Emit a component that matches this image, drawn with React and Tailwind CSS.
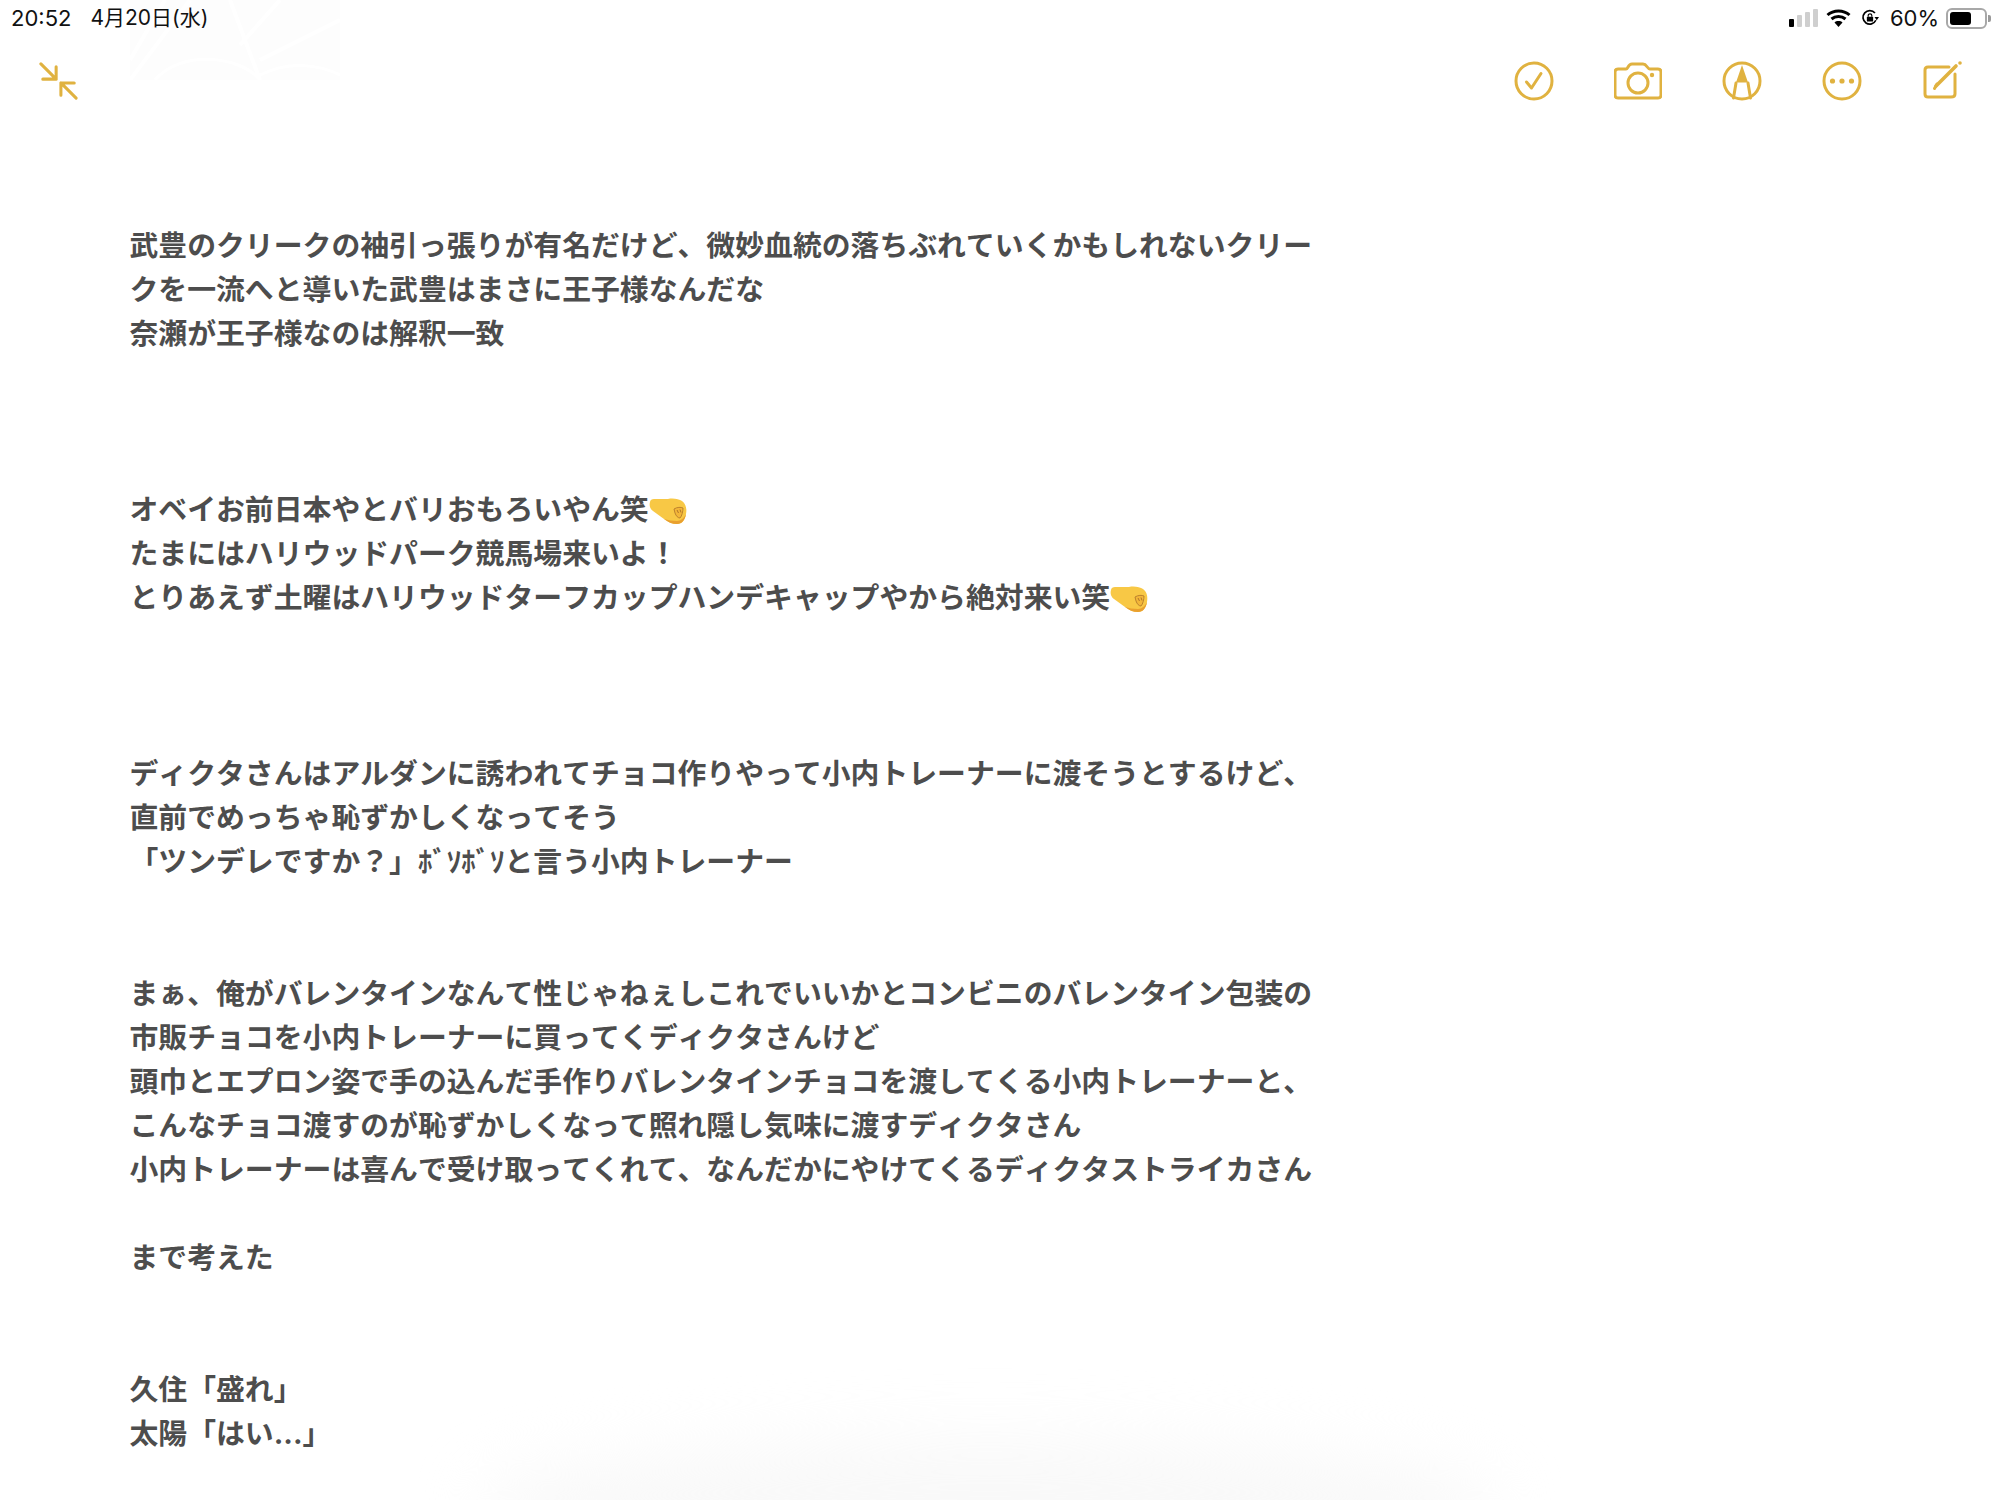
const GOLD = '#e0b240'

const NOTE_LINES = [
  '武豊のクリークの袖引っ張りが有名だけど、微妙血統の落ちぶれていくかもしれないクリー',
  'クを一流へと導いた武豊はまさに王子様なんだな',
  '奈瀬が王子様なのは解釈一致',
  '', '', '',
  'オベイお前日本やとバリおもろいやん笑@',
  'たまにはハリウッドパーク競馬場来いよ！',
  'とりあえず土曜はハリウッドターフカップハンデキャップやから絶対来い笑@',
  '', '', '',
  'ディクタさんはアルダンに誘われてチョコ作りやって小内トレーナーに渡そうとするけど、',
  '直前でめっちゃ恥ずかしくなってそう',
  '「ツンデレですか？」ﾎﾞｿﾎﾞｿと言う小内トレーナー',
  '', '',
  'まぁ、俺がバレンタインなんて性じゃねぇしこれでいいかとコンビニのバレンタイン包装の',
  '市販チョコを小内トレーナーに買ってくディクタさんけど',
  '頭巾とエプロン姿で手の込んだ手作りバレンタインチョコを渡してくる小内トレーナーと、',
  'こんなチョコ渡すのが恥ずかしくなって照れ隠し気味に渡すディクタさん',
  '小内トレーナーは喜んで受け取ってくれて、なんだかにやけてくるディクタストライカさん',
  '',
  'まで考えた',
  '', '',
  '久住「盛れ」',
  '太陽「はい...」',
]

function Fist() {
  return (
    <svg viewBox="0 0 38 27" className="inline-block w-[38px] h-[27px] align-[-5px]">
      <path d="M1 4 C1 2 3 1 5 1 L19 1 C24 0 30 1 33 3 C37 6 38 11 37 16 C36 22 33 26 28 26 C23 26 19 24 15 21 L4 13 C1 11 0 7 1 4 Z" fill="#f8c845" />
      <path d="M15 21 C19 24 23 26 28 26 C33 26 36 22 37 16 C35 20 32 23 28 23 C23 23 19 22 15 21 Z" fill="#e9a02f" />
      <path d="M25 11 C28 9 32 9 34 10 C34 13 33 18 31 20 C29 20 27 18 26 15 Z" fill="#f3b638" stroke="#b47a2c" strokeWidth="0.9" />
      <path d="M28 12 L29.5 15 M31 11.5 L32 14.5" stroke="#a96e28" strokeWidth="0.9" fill="none" />
    </svg>
  )
}

function NoteLine({ text }) {
  if (!text) return <div className="h-[44px]" />
  const hasEmoji = text.endsWith('@')
  return (
    <div className="h-[44px] leading-[44px] whitespace-nowrap">
      {hasEmoji ? text.slice(0, -1) : text}
      {hasEmoji && <Fist />}
    </div>
  )
}

function CollapseIcon() {
  return (
    <svg width="40" height="40" viewBox="0 0 42 42" fill="none" stroke={GOLD} strokeWidth="3.2" strokeLinecap="round" strokeLinejoin="round" className="mt-[2px]">
      <path d="M2 2 L18 18 M18 5 V18 H4" />
      <path d="M39 38 L23 22 M23 35 V22 H37" />
    </svg>
  )
}

function CheckIcon() {
  return (
    <svg width="40" height="40" viewBox="0 0 40 40" fill="none" stroke={GOLD} strokeWidth="3" strokeLinecap="round" strokeLinejoin="round">
      <circle cx="20" cy="20" r="18" />
      <path d="M12.5 21 L17.5 27 L27 12.5" />
    </svg>
  )
}

function CameraIcon() {
  return (
    <svg width="48" height="38" viewBox="0 0 48 38" fill="none" stroke={GOLD} strokeWidth="3" strokeLinecap="round" strokeLinejoin="round">
      <path d="M4 7 H12 C14 7 14 2 18 2 H29 C33 2 33 7 36 7 H44 C46 7 47 8 47 10 V33 C47 35 46 36 44 36 H4 C2 36 1 35 1 33 V10 C1 8 2 7 4 7 Z" />
      <circle cx="24" cy="21" r="10" />
      <circle cx="38" cy="13" r="2.2" fill={GOLD} stroke="none" />
    </svg>
  )
}

function MarkupIcon() {
  return (
    <svg width="40" height="40" viewBox="0 0 40 40" fill="none" stroke={GOLD} strokeWidth="3" strokeLinecap="round" strokeLinejoin="round">
      <circle cx="20" cy="20" r="18" />
      <path d="M14 21.5 L20 4 L26 21.5 Z" fill={GOLD} stroke="none" />
      <path d="M14 22 L11.5 37 M26 22 L28.5 37" />
    </svg>
  )
}

function MoreIcon() {
  return (
    <svg width="40" height="40" viewBox="0 0 40 40" fill="none" stroke={GOLD} strokeWidth="3">
      <circle cx="20" cy="20" r="18" />
      <circle cx="10.5" cy="20" r="2.6" fill={GOLD} stroke="none" />
      <circle cx="20" cy="20" r="2.6" fill={GOLD} stroke="none" />
      <circle cx="29.5" cy="20" r="2.6" fill={GOLD} stroke="none" />
    </svg>
  )
}

function ComposeIcon() {
  return (
    <svg width="40" height="40" viewBox="0 0 40 40" fill="none" stroke={GOLD} strokeWidth="3" strokeLinecap="round" strokeLinejoin="round">
      <path d="M26 6 H5 C3 6 2 7 2 9 V33 C2 35 3 36 5 36 H28 C30 36 32 35 32 33 V13" />
      <path d="M13 25 L33 5" strokeWidth="3.6" />
      <path d="M11.5 27.5 L14 23" />
      <circle cx="37" cy="2" r="1.8" fill={GOLD} stroke="none" />
    </svg>
  )
}

function SignalBars() {
  return (
    <div className="flex items-end gap-[3px] h-[18px]">
      <div className="w-[5px] h-[8px] bg-black rounded-[1px]" />
      <div className="w-[5px] h-[12px] bg-[#cfcfcf] rounded-[1px]" />
      <div className="w-[5px] h-[15px] bg-[#cfcfcf] rounded-[1px]" />
      <div className="w-[5px] h-[18px] bg-[#cfcfcf] rounded-[1px]" />
    </div>
  )
}

function WifiIcon() {
  return (
    <svg width="25" height="18" viewBox="0 0 25 18" fill="none" stroke="#000" strokeWidth="3">
      <path d="M1.5 6 C7.5 0.5 17.5 0.5 23.5 6" />
      <path d="M5.5 10 C9.5 6.5 15.5 6.5 19.5 10" />
      <path d="M12.5 18 L8.5 13.5 C10.5 11.6 14.5 11.6 16.5 13.5 Z" fill="#000" stroke="none" />
    </svg>
  )
}

function LockRotation() {
  return (
    <svg width="18" height="18" viewBox="0 0 20 20" fill="none" stroke="#000" strokeWidth="1.9">
      <path d="M16.5 12.5 A7.5 7.5 0 1 1 15.5 4.5" />
      <path d="M15 9 L20 9 L17.5 12.5 Z" fill="#000" stroke="none" />
      <rect x="6.5" y="8.5" width="7" height="5.5" rx="1" fill="#000" stroke="none" />
      <path d="M8 8.5 V7 C8 5 12 5 12 7 V8.5" strokeWidth="1.3" />
    </svg>
  )
}

function Battery() {
  return (
    <div className="flex items-center gap-[1px]">
      <div className="w-[41px] h-[21px] rounded-[6px] border-2 border-[#a8a8a8] p-[2px]">
        <div className="w-[64%] h-full bg-black rounded-[3px]" />
      </div>
      <div className="w-[3px] h-[7px] bg-[#9a9a9a] rounded-r-[2px]" />
    </div>
  )
}

// faint wallpaper shapes bleeding through the top bar
function Wallpaper() {
  return (
    <svg width="210" height="80" viewBox="0 0 210 80" className="absolute left-[130px] top-0">
      <rect width="210" height="80" fill="#fdfdfd" />
      <path d="M0 60 L35 0 M60 0 L0 80 M100 0 L130 80 M150 0 L110 45 M210 20 L130 60" stroke="#fff" strokeWidth="4" fill="none" />
      <path d="M25 80 C50 50 110 55 130 80 M130 75 C160 60 190 65 210 75" stroke="#fff" strokeWidth="3" fill="none" />
    </svg>
  )
}

export default function App() {
  return (
    <div
      className="relative w-[2000px] h-[1500px] bg-white overflow-hidden"
      style={{ fontFamily: '"Inter", "Noto Sans CJK JP", sans-serif' }}
    >
      <Wallpaper />
      {/* soft shadow at the bottom */}
      <div className="absolute left-[480px] bottom-[-70px] w-[1020px] h-[130px] rounded-[50%] bg-[#f9f9f9] blur-[30px]" />

      <div className="relative">
        {/* Status bar */}
        <div className="flex items-center justify-between h-[36px] pl-[11px] pr-[9px] text-[22px] text-[#111]">
          <div className="flex items-center gap-[19px]">
            <span>20:52</span>
            <span className="text-[21px]">4月20日(水)</span>
          </div>
          <div className="flex items-center">
            <SignalBars />
            <div className="ml-[8px]"><WifiIcon /></div>
            <div className="ml-[10px]"><LockRotation /></div>
            <span className="ml-[11px]">60%</span>
            <div className="ml-[7px]"><Battery /></div>
          </div>
        </div>

        {/* Toolbar */}
        <div className="flex items-center justify-between h-[90px] pl-[39px] pr-[37px]">
          <CollapseIcon />
          <div className="flex items-center gap-[60px]">
            <CheckIcon />
            <CameraIcon />
            <MarkupIcon />
            <MoreIcon />
            <div className="ml-px"><ComposeIcon /></div>
          </div>
        </div>

        {/* Note body */}
        <div className="pt-[98px] pl-[129.5px] text-[28.85px] font-bold text-[#4d4d4d] [text-spacing-trim:space-all] [font-kerning:none]">
          {NOTE_LINES.map((line, i) => (
            <NoteLine key={i} text={line} />
          ))}
        </div>
      </div>
    </div>
  )
}
